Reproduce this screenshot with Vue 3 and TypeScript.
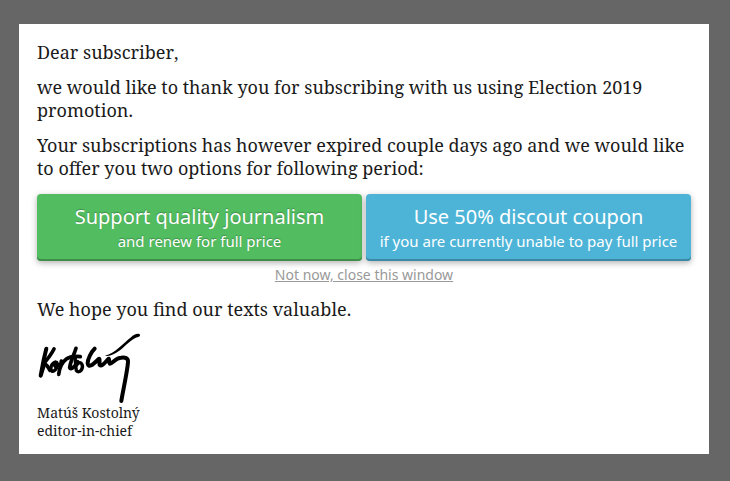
<script setup lang="ts">
interface Offer {
  tone: 'green' | 'blue'
  title: string
  note: string
}

const offers: Offer[] = [
  { tone: 'green', title: 'Support quality journalism', note: 'and renew for full price' },
  { tone: 'blue', title: 'Use 50% discout coupon', note: 'if you are currently unable to pay full price' },
]
</script>

<template>
  <div class="overlay">
    <main class="dialog">
      <p class="greeting">Dear subscriber,</p>
      <p>we would like to thank you for subscribing with us using Election 2019<br />promotion.</p>
      <p>Your subscriptions has however expired couple days ago and we would like<br />to offer you two options for following period:</p>
      <div class="offers">
        <button v-for="offer in offers" :key="offer.tone" class="offer" :class="offer.tone">
          <span class="title">{{ offer.title }}</span>
          <span class="note">{{ offer.note }}</span>
        </button>
      </div>
      <a class="dismiss">Not now, close this window</a>
      <p>We hope you find our texts valuable.</p>
      <svg class="signature" viewBox="21 21 312 216" fill="none" stroke="#000" stroke-linecap="round" stroke-linejoin="round">
        <path stroke-width="12" d="M49 71 L41 105 L32 152 L43 116" />
        <path stroke-width="11" d="M72 72 C65 86 53 102 40 117 C50 115 54 128 60 136" />
        <path stroke-width="10" d="M76 111 C64 115 59 130 66 139 C77 140 87 121 80 112 C76 109 71 120 77 126" />
        <path stroke-width="11" d="M94 108 L86 148 C88 130 96 112 109 102 C120 94 135 93 151 95" />
        <path stroke-width="11" d="M138 70 C132 90 121 109 119 128 C122 137 136 124 143 110" />
        <path stroke-width="10" d="M136 96 C135 108 137 121 139 137 C149 147 161 131 156 118 C152 109 142 113 138 124" />
        <path stroke-width="12" d="M194 71 C183 82 173 102 173 115 C175 133 193 114 206 102 C211 99 207 112 209 120 C216 126 226 111 236 101 C239 102 235 113 239 116 C249 115 257 98 273 98 C286 96 294 100 294 109 C294 130 279 197 274 228" />
        <path fill="#000" stroke="none" d="M225 92 C254 86 281 54 303 37 C311 30 319 25 328 27 C333 30 329 36 321 37 C304 43 288 62 270 76 C254 88 239 95 225 92Z" />
      </svg>
      <div class="signed">Matúš Kostolný<br />editor-in-chief</div>
    </main>
  </div>
</template>

<style>
body {
  margin: 0;
}
</style>

<style scoped>
.overlay {
  box-sizing: border-box;
  height: 481px;
  padding: 24px 21px 27px 19px;
  background: #666;
}

.dialog {
  box-sizing: border-box;
  height: 430px;
  padding: 17px 18px 0;
  background: #fff;
  color: #1a1a1a;
  font: 18px/23px "Noto Serif", "Droid Serif", "DejaVu Serif Condensed", "DejaVu Serif", serif;
  white-space: nowrap;
}

p {
  margin: 0 0 12px;
}

.greeting {
  font-kerning: none;
}

.offers {
  display: flex;
  gap: 4px;
  padding-top: 2px;
}

.offer {
  flex: 1 1 0;
  min-width: 0;
  height: 67px;
  box-sizing: border-box;
  display: flex;
  flex-direction: column;
  align-items: center;
  padding: 9px 0 0;
  border: 0;
  border-radius: 4px;
  color: #fff;
  font-family: "Noto Sans", "Open Sans", sans-serif;
  white-space: nowrap;
}

.green {
  background: #52bc60;
  box-shadow: inset 0 -2px #3e8e49, 0 2px 6px rgba(0, 0, 0, 0.3);
  text-shadow: 0 -1px 1px rgba(0, 0, 0, 0.25);
}

.blue {
  background: #4db4d7;
  box-shadow: inset 0 -2px #3a88a3, 0 2px 6px rgba(0, 0, 0, 0.3);
}

.title {
  font-size: 20px;
  line-height: 28px;
}

.note {
  font-size: 15px;
  line-height: 21px;
}

.dismiss {
  display: block;
  margin: 4px 0 13px;
  color: #999;
  font: 14px/20px "Noto Sans", "Open Sans", sans-serif;
  text-align: center;
  text-decoration: underline;
}

.signature {
  display: block;
  width: 104px;
  height: 72px;
  margin-top: -1px;
}

.signed {
  font-size: 14px;
  line-height: 18px;
}
</style>
